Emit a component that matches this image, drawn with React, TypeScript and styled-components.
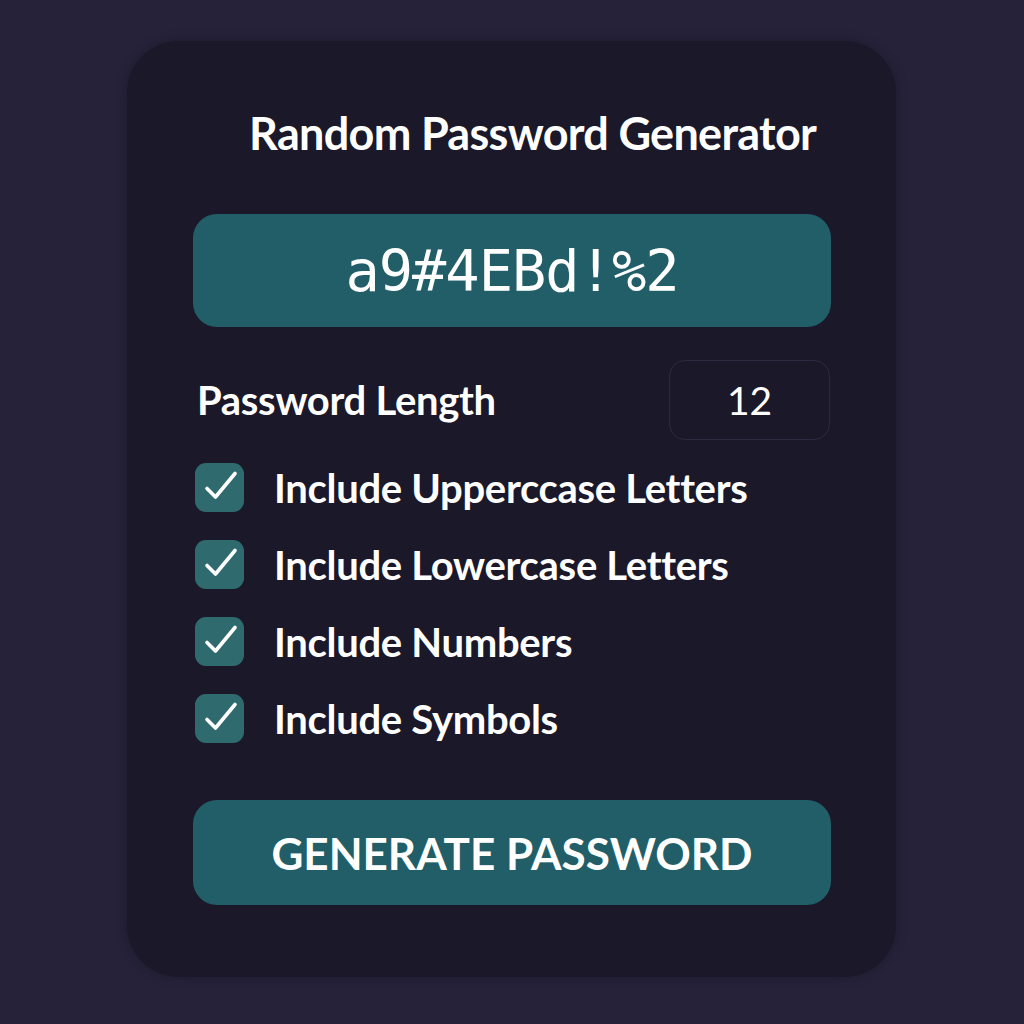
import React from "react";
import styled, { createGlobalStyle } from "styled-components";

const Global = createGlobalStyle`
  html, body { margin: 0; padding: 0; background: #26223a; }
  body { font-family: Lato, "Noto Sans", sans-serif; }
`;

const Page = styled.div`
  width: 1024px;
  height: 1024px;
  display: flex;
  justify-content: center;
  padding-top: 41px;
  box-sizing: border-box;
  background: #26223a;
`;

const Card = styled.div`
  width: 769px;
  height: 936px;
  margin-left: -1px;
  background: #1a1829;
  border-radius: 52px;
  box-sizing: border-box;
  padding: 60px 65px 0 66px;
  display: flex;
  flex-direction: column;
  box-shadow: 0 0 12px rgba(0, 0, 0, 0.25);
`;

const Title = styled.h1`
  margin: 0 0 0 56px;
  font-size: 45px;
  font-weight: 700;
  color: #ffffff;
  line-height: 64px;
  letter-spacing: -0.7px;
  white-space: nowrap;
`;

const Display = styled.div`
  margin-top: 49px;
  height: 113px;
  border-radius: 24px;
  background: #215e68;
  display: flex;
  align-items: center;
  justify-content: center;
  font-family: "DejaVu Sans Mono", monospace;
  font-size: 57px;
  color: #ffffff;
  letter-spacing: -1px;
`;

const LengthRow = styled.div`
  margin-top: 33px;
  display: flex;
  align-items: center;
  justify-content: space-between;
  padding-left: 4px;
`;

const Label = styled.span`
  font-size: 40px;
  font-weight: 700;
  color: #ffffff;
  letter-spacing: -0.3px;
  white-space: nowrap;
`;

const NumberBox = styled.div`
  width: 161px;
  height: 80px;
  box-sizing: border-box;
  border: 1.5px solid #2d2b42;
  border-radius: 16px;
  display: flex;
  align-items: center;
  justify-content: center;
  font-size: 39px;
  font-weight: 400;
  color: #ffffff;
  margin-right: 1px;
`;

const Options = styled.div`
  margin-top: 23px;
  display: flex;
  flex-direction: column;
  gap: 28px;
  padding-left: 2px;
`;

const Option = styled.label`
  display: flex;
  align-items: center;
  gap: 30px;
  height: 49px;
`;

const Box = styled.span`
  width: 49px;
  height: 49px;
  border-radius: 11px;
  background: #2f6b6e;
  display: flex;
  align-items: center;
  justify-content: center;
  flex-shrink: 0;
`;

const Button = styled.button`
  margin-top: 57px;
  height: 105px;
  border: none;
  border-radius: 24px;
  background: #215e68;
  color: #ffffff;
  font-family: Lato, "Noto Sans", sans-serif;
  font-size: 44px;
  font-weight: 700;
  letter-spacing: 0px;
  cursor: pointer;
`;

const Check = () => (
  <svg width="49" height="49" viewBox="0 0 49 49" fill="none">
    <path d="M12 25.5 L20.5 34 L40 10.5" stroke="#ffffff" strokeWidth="3.6" strokeLinecap="round" strokeLinejoin="round" />
  </svg>
);

const options = [
  "Include Upperccase Letters",
  "Include Lowercase Letters",
  "Include Numbers",
  "Include Symbols",
];

export default function App() {
  return (
    <>
      <Global />
      <Page>
        <Card>
          <Title>Random Password Generator</Title>
          <Display>a9#4EBd!%2</Display>
          <LengthRow>
            <Label>Password Length</Label>
            <NumberBox>12</NumberBox>
          </LengthRow>
          <Options>
            {options.map((o) => (
              <Option key={o}>
                <Box>
                  <Check />
                </Box>
                <Label>{o}</Label>
              </Option>
            ))}
          </Options>
          <Button>GENERATE PASSWORD</Button>
        </Card>
      </Page>
    </>
  );
}
